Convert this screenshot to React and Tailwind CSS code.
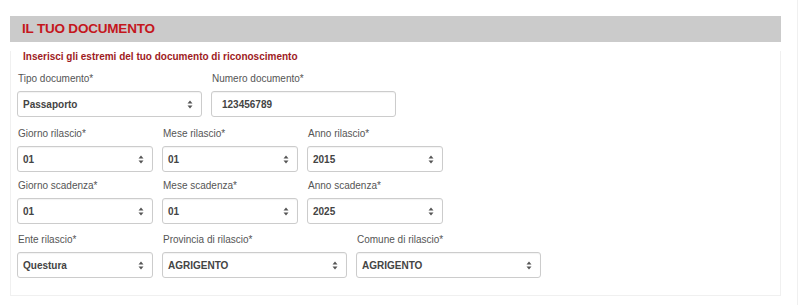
import React from 'react';

function Arrows() {
  return (
    <svg width="6" height="9" viewBox="0 0 6 9" className="shrink-0">
      <path d="M3 0.5 L5.5 3.6 L0.5 3.6 Z" fill="#555" />
      <path d="M3 8.5 L5.5 5.4 L0.5 5.4 Z" fill="#555" />
    </svg>
  );
}

function Field({ label, value, width, select = true }) {
  return (
    <div className={`flex flex-col ${width}`}>
      <label className="text-[10px] text-[#555] leading-[12px] pl-[1px]">{label}</label>
      <div className={`mt-[6px] h-[26px] flex items-center justify-between border border-[#ccc] rounded-[3px] bg-white pr-[8px] shadow-[inset_0_1px_1px_rgba(0,0,0,0.05)] ${select ? 'pl-[5px]' : 'pl-[10px]'}`}>
        <span className="text-[10px] font-bold text-[#444]">{value}</span>
        {select && <Arrows />}
      </div>
    </div>
  );
}

export default function App() {
  return (
    <div className="w-[800px] h-[305px] bg-white font-['Liberation_Sans',Arial,sans-serif] pt-[16px] pl-[10px] relative">
      <div className="w-[771px]">
        <div className="h-[26px] bg-[#cbcbcb] flex items-center px-[12px]">
          <h2 className="text-[13.5px] font-bold text-[#c4161c] tracking-[-0.2px]">IL TUO DOCUMENTO</h2>
        </div>
        <div className="h-[245px] border border-t-0 border-[#f0f0f0] px-[6px]">
          <p className="mt-[9px] pl-[6px] text-[10px] leading-[12px] font-bold text-[#9e1b1e]">Inserisci gli estremi del tuo documento di riconoscimento</p>
          <div className="mt-[10px] flex gap-[9px]">
            <Field label="Tipo documento*" value="Passaporto" width="w-[185px]" />
            <Field label="Numero documento*" value="123456789" width="w-[185px]" select={false} />
          </div>
          <div className="mt-[11px] flex gap-[9px]">
            <Field label="Giorno rilascio*" value="01" width="w-[136px]" />
            <Field label="Mese rilascio*" value="01" width="w-[136px]" />
            <Field label="Anno rilascio*" value="2015" width="w-[136px]" />
          </div>
          <div className="mt-[8px] flex gap-[9px]">
            <Field label="Giorno scadenza*" value="01" width="w-[136px]" />
            <Field label="Mese scadenza*" value="01" width="w-[136px]" />
            <Field label="Anno scadenza*" value="2025" width="w-[136px]" />
          </div>
          <div className="mt-[10px] flex gap-[9px]">
            <Field label="Ente rilascio*" value="Questura" width="w-[136px]" />
            <Field label="Provincia di rilascio*" value="AGRIGENTO" width="w-[185px]" />
            <Field label="Comune di rilascio*" value="AGRIGENTO" width="w-[185px]" />
          </div>
        </div>
      </div>
      <div className="absolute top-0 right-[2px] w-px h-full bg-[#f0f0f0]" />
    </div>
  );
}
